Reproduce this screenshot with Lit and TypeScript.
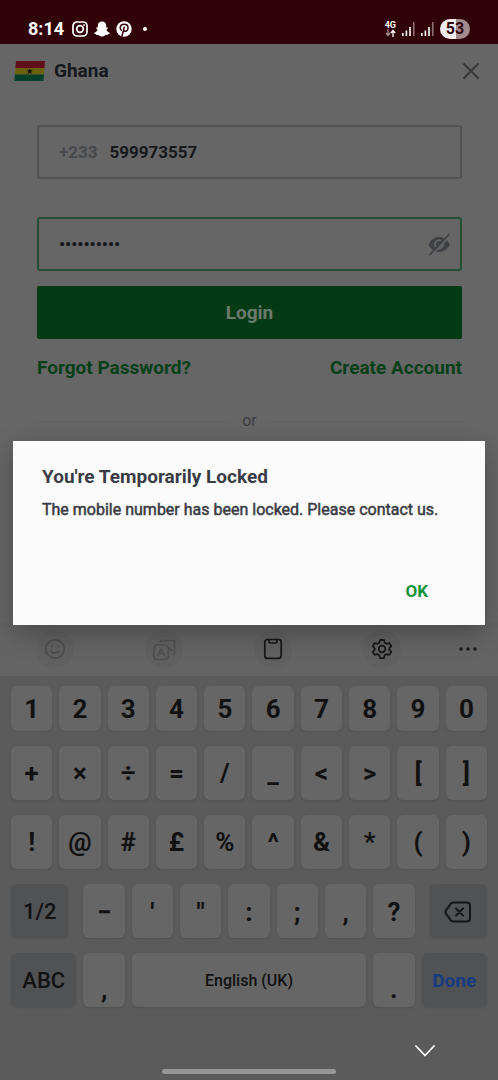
import { LitElement, html, svg, css, type TemplateResult } from "lit";
import { customElement } from "lit/decorators.js";

type Key = { label: string; kind?: "plain" | "mod" | "space" | "done"; icon?: TemplateResult; drop?: boolean };

const chars = (s: string): Key[] => s.split(" ").map((label) => ({ label }));

const backspace = html`<svg width="28" height="22" viewBox="0 0 28 22" fill="none" stroke="#151515" stroke-width="2" stroke-linecap="round" stroke-linejoin="round">
  <path d="M9.500 1.500h13.700c1.900 0 2.800 1 2.800 2.800v13.400c0 1.800-.9 2.800-2.800 2.800H9.500c-1.200 0-2.100-.4-2.800-1.300L2 12.700c-.9-1.200-.9-2.200 0-3.400L6.700 2.800C7.400 1.900 8.300 1.500 9.500 1.500z"/>
  <path d="M12 7.500l7 7M19 7.500l-7 7"/></svg>`;

const ROWS: { cls: string; keys: Key[] }[] = [
  { cls: "row ten short", keys: chars("1 2 3 4 5 6 7 8 9 0") },
  { cls: "row ten", keys: chars("+ × ÷ = / _ < > [ ]") },
  { cls: "row ten", keys: chars("! @ # £ % ^ & * ( )") },
  {
    cls: "row sided inset",
    keys: [{ label: "1/2", kind: "mod" }, ...chars("− ' \" : ; , ?"), { label: "Backspace", kind: "mod", icon: backspace }],
  },
  {
    cls: "row sided",
    keys: [
      { label: "ABC", kind: "mod" },
      { label: ",", drop: true },
      { label: "English (UK)", kind: "space" },
      { label: ".", drop: true },
      { label: "Done", kind: "done" },
    ],
  },
];

@customElement("status-bar")
class StatusBar extends LitElement {
  static styles = css`
    :host {
      display: flex;
      align-items: center;
      justify-content: space-between;
      height: 44px;
      padding: 14px 28px 0;
      box-sizing: border-box;
      background: #310108;
      color: #fff;
      font: 700 18px/20px Roboto, sans-serif;
    }
    .group { display: flex; align-items: center; gap: 6px; }
    .time { margin-right: 2px; }
    .dot { width: 4px; height: 4px; margin-left: 5px; border-radius: 50%; background: #fff; }
    .battery {
      width: 30px;
      border-radius: 10px;
      text-align: center;
      font-size: 16px;
      line-height: 20px;
      color: #310108;
      background: linear-gradient(90deg, #f4eded 53%, #a58b8e 53%);
    }
    .net { display: grid; justify-items: center; font-size: 9px; line-height: 8px; }
    svg { display: block; }
  `;
  private bars() {
    return html`<svg width="13" height="14" viewBox="0 0 13 14">
      <path fill="#fff" d="M0 11h1.600v3H0zM3.600 8.500h1.600V14H3.600zM7.200 5h1.600v9H7.200z"/>
      <path fill="#8d6d71" d="M11 0h1.600v14H11z"/></svg>`;
  }
  render() {
    return html`
      <div class="group">
        <span class="time">8:14</span>
        <svg width="16" height="16" viewBox="0 0 16 16" fill="none" stroke="#fff" stroke-width="1.700">
          <rect x="1" y="1" width="14" height="14" rx="4"/><circle cx="8" cy="8" r="3.300"/><circle cx="12" cy="4" r=".6" fill="#fff" stroke-width=".8"/></svg>
        <svg width="16" height="16" viewBox="0 0 16 16" fill="#fff">
          <path d="M8 .5c2.600 0 4.200 1.800 4.200 4.300v1.700c.5.2 1.200-.3 1.600.2.4.6-.3 1.100-1.300 1.500.3 1.700 1.500 3 3.200 3.500.6.300-.1 1.300-1.800 1.500-.2.4-.1.900-.6.900-.8 0-1.600-.2-2.400.3C10 15 9.200 15.600 8 15.600S6 15 5.100 14.400c-.8-.5-1.600-.3-2.400-.3-.5 0-.4-.5-.6-.9C.4 13-.3 12 .3 11.700 2 11.200 3.200 9.900 3.500 8.200 2.500 7.800 1.800 7.300 2.200 6.700c.4-.5 1.100 0 1.600-.2V4.800C3.800 2.300 5.400.5 8 .5z"/></svg>
        <svg width="16" height="16" viewBox="0 0 16 16">
          <circle cx="8" cy="8" r="7.700" fill="#fff"/>
          <path d="M5.300 9.200C4.300 8.300 4 7.300 4.200 6.200 4.600 4.300 6.300 3.300 8.200 3.300c2.300 0 3.800 1.400 3.800 3.300 0 2-1.200 3.700-2.900 3.700-.8 0-1.400-.4-1.600-.9M8.200 6.200L6 15" fill="none" stroke="#310108" stroke-width="1.500" stroke-linecap="round"/></svg>
        <span class="dot"></span>
      </div>
      <div class="group">
        <div class="net"><span>4G</span>
          <svg width="11" height="8" viewBox="0 0 11 8" fill="none" stroke-width="1.300"><path stroke="#a58b8e" d="M3 0v6M1 4l2 2.500L5 4"/><path stroke="#fff" d="M8 8V1.500M5.800 4L8 1.500 10.200 4"/></svg>
        </div>
        ${this.bars()}${this.bars()}
        <span class="battery">53</span>
      </div>`;
  }
}

@customElement("login-form")
class LoginForm extends LitElement {
  static styles = css`
    :host { display: block; flex: 1; font: 700 17px/24px Roboto, sans-serif; color: #17181b; }
    header { display: flex; align-items: center; gap: 8px; height: 54px; padding: 0 18px 0 14px; }
    h1 { flex: 1; margin: 0; font-size: 19px; line-height: 24px; color: #15171c; }
    svg { display: block; }
    button, input { font: inherit; color: inherit; border: 0; background: none; padding: 0; }
    form { display: flex; flex-direction: column; padding: 27px 36px 0 37px; }
    .field {
      display: flex;
      align-items: center;
      gap: 12px;
      height: 54px;
      padding: 0 9px 0 20px;
      box-sizing: border-box;
      border: 2px solid #515254;
      border-radius: 3px;
    }
    .field.active { margin: 38px 0 15px; border-color: #234f32; }
    .field input { flex: 1; min-width: 0; outline: none; }
    .code { color: #47494d; }
    button.login {
      height: 53px;
      border-radius: 2px;
      background: #043b15;
      color: #6b7a6d;
      font-size: 19px;
    }
    .links { display: flex; justify-content: space-between; margin-top: 17px; font-size: 19px; }
    a { color: #043f18; text-decoration: none; }
    .or { display: flex; align-items: center; gap: 14px; margin-top: 29px; font-size: 16px; font-weight: 400; color: #3b3c3f; }
    .or::before, .or::after { content: ""; flex: 1; height: 1px; background: #606060; }
  `;
  render() {
    return html`
      <header>
        <svg width="32" height="20" viewBox="0 0 32 20">
          <path fill="#620d1a" d="M2 0h29l-.5 7H1.400z"/><path fill="#6a6208" d="M1.400 7h29.200l-.5 6.500H.9z"/><path fill="#043f29" d="M.9 13.500h29.200L29.500 20H.3z"/>
          <path fill="#16130a" d="M15.800 7l.8 2.300H19l-1.900 1.500.7 2.400-2-1.400-2 1.400.7-2.400-1.900-1.500H15z"/></svg>
        <h1>Ghana</h1>
        <button aria-label="Close"><svg width="18" height="18" viewBox="0 0 18 18" stroke="#37383a" stroke-width="2"><path d="M1.500 1.500l15 15M16.500 1.500l-15 15"/></svg></button>
      </header>
      <form @submit=${(e: Event) => e.preventDefault()}>
        <div class="field">
          <label class="code" for="phone">+233</label>
          <input id="phone" type="tel" .value=${"599973557"} />
        </div>
        <div class="field active">
          <input type="password" aria-label="Password" autocomplete="off" .value=${"0000000000"} />
          <button type="button" aria-label="Show password">
            <svg width="24" height="24" viewBox="0 0 24 24">
              <path fill="#3f4043" d="M1.500 12.500C4 7.500 7.500 5 12 5s8.500 2.500 10.700 7.500C20.500 17.300 16.700 20 12 20S3.700 17.300 1.500 12.500z"/>
              <path fill="none" stroke="#666" stroke-width="1.600" d="M8.500 15a4.500 4.500 0 0 1 5.500-6.500M15.800 10.500a4.500 4.500 0 0 1-5.500 6"/>
              <path stroke="#666" stroke-width="1.600" d="M4.500 23L23.500 3.500"/><path stroke="#414245" stroke-width="1.800" d="M2.500 23L22.500 2"/></svg>
          </button>
        </div>
        <button class="login">Login</button>
        <div class="links"><a href="#forgot">Forgot Password?</a><a href="#create">Create Account</a></div>
        <div class="or">or</div>
      </form>`;
  }
}

@customElement("soft-keyboard")
class SoftKeyboard extends LitElement {
  static styles = css`
    :host { display: block; background: #5b5b5b; font: 500 26px/30px Roboto, sans-serif; color: #111; }
    svg { display: block; }
    button { font: inherit; color: inherit; border: 0; padding: 0; background: none; }
    .tools { display: grid; grid-template-columns: repeat(4, 1fr) 61px; align-items: center; justify-items: center; height: 54px; background: #646464; }
    .tool { display: grid; place-items: center; width: 38px; height: 38px; border-radius: 50%; background: #606060; }
    .tool.bare { background: none; }
    .rows { display: grid; gap: 15px; padding: 10px 11px 0; }
    .row { display: grid; gap: 7px; height: 54px; --key: calc((100% - 63px) / 10); }
    .short { height: 45px; }
    .ten { grid-template-columns: repeat(10, 1fr); }
    .sided { grid-template-columns: 1fr repeat(7, var(--key)) 1fr; }
    .key {
      display: grid;
      place-items: center;
      min-width: 0;
      border-radius: 6px;
      background: #666;
      box-shadow: 0 1px 2px #505050;
      font-weight: 700;
    }
    .sided .key { padding-top: 2px; }
    .mod, .done { background: #515254; font-size: 22px; font-weight: 500; box-shadow: 0 1px 2px #525254; }
    .done { color: #183a80; font-size: 19px; font-weight: 700; }
    .space { grid-column: span 5; font-size: 16px; font-weight: 500; }
    .sided .drop { padding-top: 18px; }
    .inset .mod:first-child { margin-right: 8px; }
    .inset .mod:last-child { margin-left: 8px; }
    footer { display: flex; flex-direction: column; height: 73px; box-sizing: border-box; padding: 37px 62px 6px; align-items: center; justify-content: space-between; }
    .hide { align-self: flex-end; }
    .home { width: 35%; min-width: 174px; height: 5px; border-radius: 3px; background: #969696; }
  `;
  private tool(name: string, shape: unknown, color = "#161616", cls = "tool") {
    return html`<button class=${cls} aria-label=${name}>
      <svg width="24" height="24" viewBox="0 0 24 24" fill="none" stroke=${color} stroke-width="1.700" stroke-linecap="round" stroke-linejoin="round">${shape}</svg>
    </button>`;
  }
  render() {
    return html`
      <div class="tools">
        ${this.tool("Emoji", svg`<circle cx="12" cy="12" r="9.200"/><path d="M8 14c1.800 3 6.200 3 8 0M8.800 9v.6M15.200 9v.6"/>`, "#4d4d4d")}
        ${this.tool("Translate", svg`<rect x="2" y="8" width="14.500" height="14.500" rx="3.500"/><path d="M8.500 5V4.500C8.500 4 9 3.500 9.500 3.500H22.500V15.500C22.500 17 22 17.500 20.500 17.500M6 18.500l3.200-6.500 3.200 6.500M7 16.500h4.500M17.500 11.500l2.500 2"/>`, "#505050")}
        ${this.tool("Clipboard", svg`<rect x="3.800" y="2.500" width="16.400" height="18.800" rx="2.500"/><path d="M8 2.500v2.300c0 .8.4 1.200 1.200 1.200h5.600c.8 0 1.200-.4 1.200-1.200V2.500"/>`)}
        ${this.tool("Settings", svg`<circle cx="12" cy="12" r="3.300"/><path d="M10.200 2.800h3.600l.9 2.900 1.800 1.100 3-.7 1.800 3.100-2.100 2.200v1.200l2.100 2.200-1.800 3.100-3-.7-1.800 1.100-.9 2.900h-3.600l-.9-2.900-1.800-1.100-3 .7-1.800-3.100 2.100-2.200v-1.200L2.700 9.200l1.800-3.100 3 .7 1.800-1.100z"/>`)}
        ${this.tool("More", svg`<g fill="#161616" stroke="none"><circle cx="5" cy="12" r="1.700"/><circle cx="12" cy="12" r="1.700"/><circle cx="19" cy="12" r="1.700"/></g>`, "#161616", "tool bare")}
      </div>
      <div class="rows">
        ${ROWS.map(
          (row) => html`<div class=${row.cls}>
            ${row.keys.map((k) => html`<button class="key ${k.kind ?? "plain"} ${k.drop ? "drop" : ""}" aria-label=${k.label}>${k.icon ?? k.label}</button>`)}
          </div>`
        )}
      </div>
      <footer>
        <button class="hide" aria-label="Hide keyboard"><svg width="22" height="14" viewBox="0 0 22 14" fill="none" stroke="#fff" stroke-width="1.800" stroke-linecap="round"><path d="M2 2l9 9.500L20 2"/></svg></button>
        <div class="home"></div>
      </footer>`;
  }
}

@customElement("app-root")
class AppRoot extends LitElement {
  static styles = css`
    :host { display: flex; flex-direction: column; position: relative; min-height: 100vh; background: #666; font-family: Roboto, sans-serif; }
    .overlay { position: absolute; inset: 0; display: grid; align-items: center; padding: 0 13px 14px; }
    .dialog {
      display: flex;
      flex-direction: column;
      padding: 24px 28px 22px 29px;
      background: #fbfbfb;
      color: #3a3c45;
      box-shadow: 0 8px 24px rgba(0, 0, 0, 0.28);
    }
    h2 { margin: 0 0 11px; font-size: 19px; line-height: 24px; font-weight: 700; }
    p { margin: 0 0 59px; font-size: 16px; line-height: 20px; font-weight: 400; -webkit-text-stroke: 0.5px; }
    .ok { align-self: flex-end; margin-right: 29px; padding: 0; border: 0; background: none; color: #0f9438; font: 700 17px/24px Roboto, sans-serif; }
  `;
  render() {
    return html`
      <status-bar></status-bar>
      <login-form></login-form>
      <soft-keyboard></soft-keyboard>
      <div class="overlay">
        <div class="dialog" role="alertdialog" aria-labelledby="title" aria-describedby="message">
          <h2 id="title">You're Temporarily Locked</h2>
          <p id="message">The mobile number has been locked. Please contact us.</p>
          <button class="ok">OK</button>
        </div>
      </div>`;
  }
}
